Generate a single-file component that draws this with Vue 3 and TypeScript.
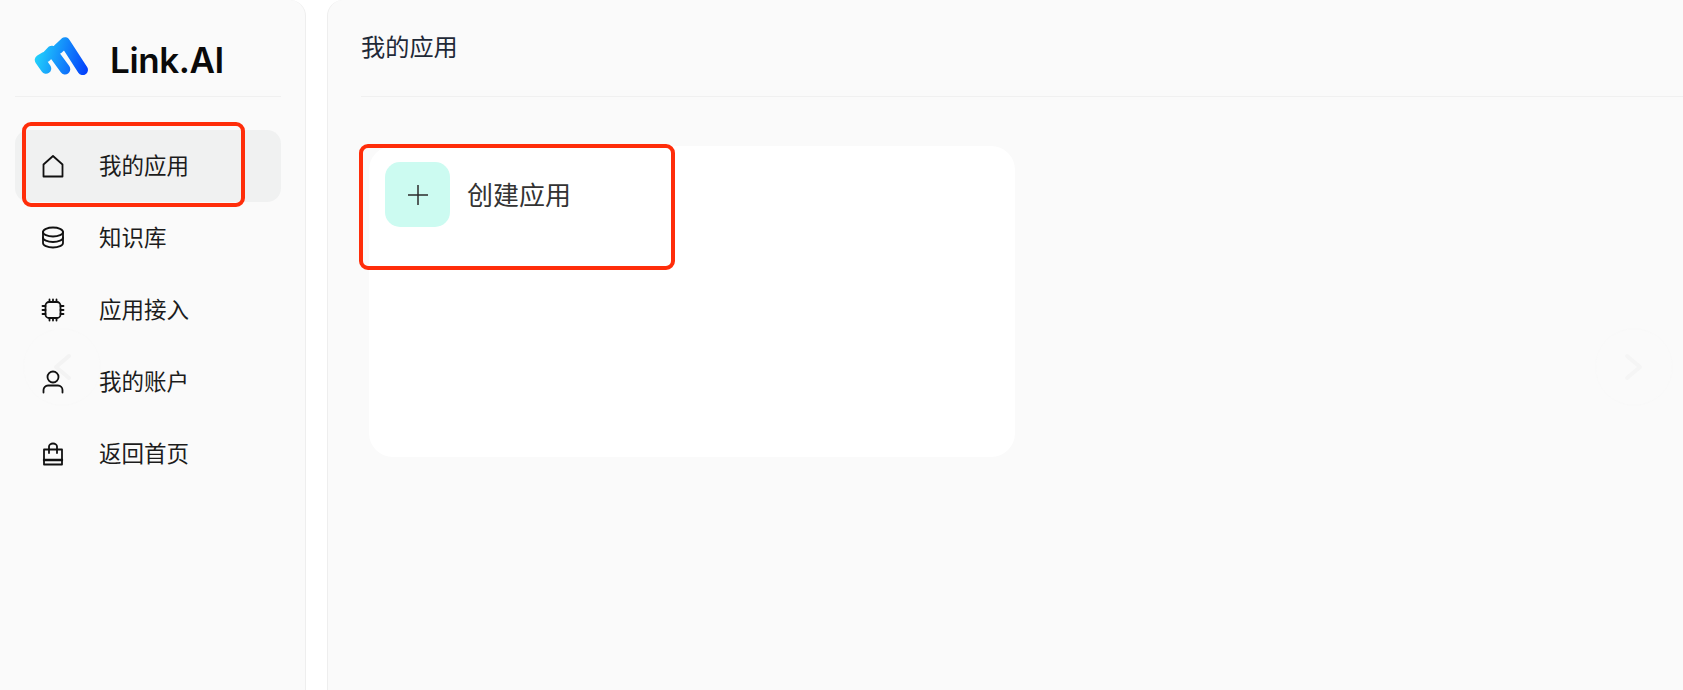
<script setup lang="ts">
interface NavItem { label: string; icon: string; active?: boolean }
const items: NavItem[] = [
  { label: '我的应用', icon: 'home', active: true },
  { label: '知识库', icon: 'db' },
  { label: '应用接入', icon: 'chip' },
  { label: '我的账户', icon: 'user' },
  { label: '返回首页', icon: 'bag' },
]
</script>

<template>
  <div class="page">
    <aside class="sidebar">
      <div class="brand">
        <svg class="logo" width="56" height="42" viewBox="0 0 56 42" fill="none">
          <defs>
            <linearGradient id="lg" gradientUnits="userSpaceOnUse" x1="2" y1="20" x2="54" y2="34">
              <stop offset="0" stop-color="#22d3fb" />
              <stop offset="1" stop-color="#0440fb" />
            </linearGradient>
          </defs>
          <path d="M13 32.500 L7 24 L12 21 M18.700 15 L32 33.200 M32 6.500 L49.700 33.800 M13 21 L18.700 15 M25 13 L32 6.500" stroke="url(#lg)" stroke-width="10.500" stroke-linecap="round" stroke-linejoin="round" />
        </svg>
        <span class="brand-name">Link.AI</span>
      </div>
      <nav class="nav">
        <div v-for="item in items" :key="item.label" class="nav-item" :class="{ active: item.active }">
          <svg class="nav-icon" width="24" height="24" viewBox="0 0 24 24" fill="none" stroke="#111" stroke-width="1.800" stroke-linecap="round" stroke-linejoin="round">
            <path v-if="item.icon === 'home'" d="M2.500 10.500 12 2 21.500 10.500V22.500H2.500Z" />
            <template v-else-if="item.icon === 'db'">
              <ellipse cx="12" cy="6" rx="10" ry="4.500" />
              <path d="M2 6v11c0 2.500 4.500 4.500 10 4.500s10-2 10-4.500V6" />
              <path d="M2 11.500c0 2.500 4.500 4.500 10 4.500s10-2 10-4.500" />
            </template>
            <template v-else-if="item.icon === 'chip'">
              <rect x="4.500" y="4" width="15" height="16" rx="3.500" />
              <path d="M8.500 1.500V4M12 1.500V4M15.500 1.500V4M8.500 20v2.500M12 20v2.500M15.500 20v2.500M1.500 8H4.500M1.500 12H4.500M1.500 16H4.500M19.500 8H22.500M19.500 12H22.500M19.500 16H22.500" />
            </template>
            <template v-else-if="item.icon === 'user'">
              <circle cx="12" cy="7" r="5.500" />
              <path d="M2.500 22.500V20a4.500 4.500 0 0 1 4.500-4.500h10a4.500 4.500 0 0 1 4.500 4.500v2.500" />
            </template>
            <template v-else>
              <path d="M3 7.500H21V22.500H3Z" />
              <path d="M3 18H21" stroke-width="2.400" />
              <path d="M8 11V4.500a4 3 0 0 1 8 0V11" />
            </template>
          </svg>
          <span class="nav-label">{{ item.label }}</span>
        </div>
      </nav>
      <div class="annot annot-nav"></div>
    </aside>

    <main class="main">
      <header class="main-head">我的应用</header>
      <section class="card">
        <div class="create">
          <span class="plus">
            <svg width="22" height="22" viewBox="0 0 22 22" fill="none" stroke="#2b2b2b" stroke-width="1.500">
              <path d="M11 1V21M1 11H21" />
            </svg>
          </span>
          <span class="create-label">创建应用</span>
        </div>
        <div class="annot annot-create"></div>
      </section>
    </main>

    <div class="arrow arrow-left">
      <svg width="24" height="30" viewBox="0 0 24 30" fill="none" stroke="#f3f3f3" stroke-width="4" stroke-linecap="round" stroke-linejoin="round">
        <path d="M19 4 6 15 19 26" />
      </svg>
    </div>
    <div class="arrow arrow-right">
      <svg width="24" height="30" viewBox="0 0 24 30" fill="none" stroke="#f5f5f5" stroke-width="4" stroke-linecap="round" stroke-linejoin="round">
        <path d="M5 4 18 15 5 26" />
      </svg>
    </div>
  </div>
</template>

<style>
html, body { margin: 0; background: #fff; overflow: hidden; }
</style>

<style scoped>
.page {
  position: relative;
  display: flex;
  gap: 21px;
  width: 1683px;
  height: 690px;
  overflow: hidden;
  font-family: "Noto Sans CJK SC", "Noto Sans", sans-serif;
}
.sidebar {
  position: relative;
  box-sizing: border-box;
  width: 306px;
  flex: none;
  padding: 0 24px 0 15px;
  background: #fafafa;
  border-right: 1px solid #eeeeee;
  border-top-right-radius: 16px;
}
.brand {
  display: flex;
  align-items: center;
  box-sizing: border-box;
  height: 97px;
  padding: 25px 0 0 18px;
  border-bottom: 1px solid #f0f0f0;
}
.logo { flex: none; margin-top: -8px; }
.brand-name {
  margin-left: 21px;
  font-family: Inter, sans-serif;
  font-size: 35px;
  font-weight: 600;
  line-height: 1;
  letter-spacing: -0.4px;
  color: #0a0a0a;
}
.nav { position: relative; z-index: 2; display: flex; flex-direction: column; padding-top: 33px; }
.nav-item {
  display: flex;
  align-items: center;
  height: 72px;
  padding-left: 26px;
  border-radius: 14px;
  color: #1c1c1c;
}
.nav-item.active { background: #f0f1f1; }
.nav-icon { flex: none; width: 24px; height: 24px; }
.nav-label { margin-left: 34px; padding-bottom: 4px; font-size: 22.500px; line-height: 1; }
.annot {
  position: absolute;
  z-index: 3;
  box-sizing: border-box;
  border: 4px solid #ff2d0a;
  border-radius: 9px;
}
.annot-nav { left: 22px; top: 122px; width: 223px; height: 85px; }
.main {
  flex: 1;
  min-width: 0;
  box-sizing: border-box;
  padding: 0 0 0 33px;
  background: #fafafa;
  border-left: 1px solid #eeeeee;
  border-top-left-radius: 16px;
}
.main-head {
  box-sizing: border-box;
  height: 97px;
  padding-top: 29px;
  font-size: 24.200px;
  line-height: 34px;
  color: #1f2937;
  border-bottom: 1px solid #f0f0f0;
}
.card {
  position: relative;
  box-sizing: border-box;
  width: 646px;
  height: 311px;
  margin: 49px 0 0 8px;
  padding: 16px;
  background: #fff;
  border-radius: 24px;
}
.create { display: flex; align-items: center; gap: 17px; }
.plus {
  display: flex;
  align-items: center;
  justify-content: center;
  width: 65px;
  height: 65px;
  background: #ccfbf1;
  border-radius: 15px;
}
.create-label { padding-bottom: 2px; font-size: 26px; line-height: 1; color: #333; }
.annot-create { left: -10px; top: -2px; width: 316px; height: 126px; }
.arrow {
  position: absolute;
  top: 329px;
  display: flex;
  align-items: center;
  justify-content: center;
  width: 76px;
  height: 76px;
  border-radius: 50%;
  background: rgba(250, 250, 250, 0.5);
  box-shadow: 0 0 6px rgba(0, 0, 0, 0.012);
  pointer-events: none;
}
.arrow-left { left: 24px; }
.arrow-right { left: 1596px; }
</style>
